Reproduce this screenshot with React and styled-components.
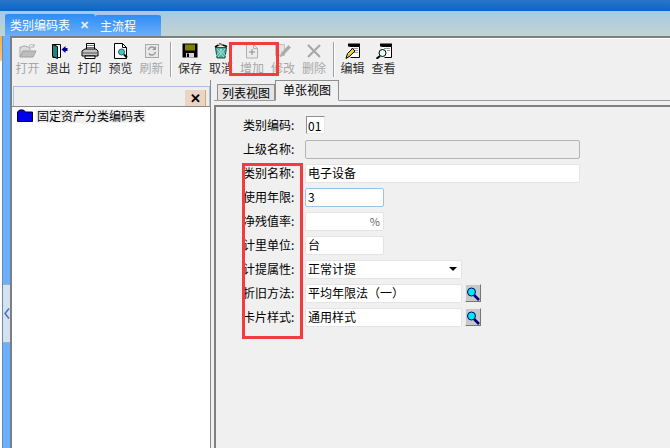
import React from 'react';
import styled, { createGlobalStyle } from 'styled-components';

const GlobalStyle = createGlobalStyle`
  html, body { margin: 0; padding: 0; background: #f0f0f0; }
  body { width: 670px; height: 448px; overflow: hidden; font-family: "Noto Sans CJK SC", "Liberation Sans", sans-serif; font-size: 12px; color: #000; text-spacing-trim: space-all; }
`;

const Page = styled.div`
  position: relative;
  width: 670px;
  height: 448px;
  display: flex;
  flex-direction: column;
  overflow: hidden;
`;

const TitleBar = styled.div`
  height: 11px;
  flex: none;
  background: linear-gradient(#2a76c8, #0a66c8);
`;

const TabBand = styled.div`
  height: 25px;
  flex: none;
  display: flex;
  align-items: flex-end;
  padding-left: 5px;
  background: linear-gradient(#a9c8e2, #c0d4d2);
`;

const TopTab = styled.div`
  height: ${p => p.$h}px;
  display: flex;
  align-items: center;
  box-sizing: border-box;
  color: #fff;
  font-size: 12px;
  border-radius: 3px 3px 0 0;
  border-top: 1px solid #9cc8f4;
  background: linear-gradient(#2f8cf6, #6aaef8);
  width: ${p => p.$w}px;
  padding: 0 0 ${p => p.$lift}px ${p => p.$pad}px;
`;

const TabClose = styled.span`
  margin-left: 10px;
  font-size: 11px;
  font-weight: bold;
  color: #e8f0ff;
`;

const Body = styled.div`
  flex: 1;
  display: flex;
  min-height: 0;
`;

const Gutter = styled.div`
  width: 2px;
  flex: none;
  background: linear-gradient(#f6b04c 0, #f6c47c 24px, #fff 26px);
`;

const SideStrip = styled.div`
  width: 8px;
  flex: none;
  display: flex;
  flex-direction: column;
  box-sizing: border-box;
  border-left: 1px solid #6a8cb0;
  background: #6ab0fc;
`;

const HandleGap = styled.div`
  height: 248px;
  flex: none;
`;

const Handle = styled.div`
  height: 59px;
  flex: none;
  display: flex;
  align-items: center;
  justify-content: center;
  box-sizing: border-box;
  background: #d4e2f0;
  border-top: 1px solid #9ab0c8;
  border-bottom: 1px solid #9ab0c8;
`;

const Main = styled.div`
  flex: 1;
  display: flex;
  flex-direction: column;
  min-width: 0;
  border-left: 2px solid #7e7e7e;
  border-top: 2px solid #7e7e7e;
  box-shadow: inset 0 1px 0 #fff;
`;

const Toolbar = styled.div`
  height: 42px;
  flex: none;
  display: flex;
  align-items: flex-start;
  padding-top: 5px;
  box-sizing: border-box;
`;

const ToolButton = styled.div`
  width: 31px;
  flex: none;
  display: flex;
  flex-direction: column;
  align-items: center;
  gap: 1px;
  white-space: nowrap;
  font-size: 12px;
  line-height: 16px;
  color: ${p => (p.$off ? '#a8a8a8' : '#303030')};
`;

const ToolIcon = styled.svg`
  width: 18px;
  height: 16px;
  display: block;
`;

const ToolSep = styled.div`
  width: 1px;
  height: 35px;
  flex: none;
  margin: -1px 2.5px 0 3px;
  background: #a0a0a0;
  border-right: 1px solid #fff;
`;

const Panes = styled.div`
  flex: 1;
  display: flex;
  min-height: 0;
`;

const LeftPane = styled.div`
  width: 199px;
  flex: none;
  display: flex;
  flex-direction: column;
  box-sizing: border-box;
  padding-top: 6px;
  border-right: 1px solid #8a8a8a;
`;

const PaneHead = styled.div`
  height: 20px;
  flex: none;
  margin-left: 1px;
  padding-right: 3px;
  display: flex;
  justify-content: flex-end;
  box-sizing: border-box;
  border: 1px solid #a8c0e0;
  border-bottom: none;
  background: #eeeeee;
`;

const PaneClose = styled.div`
  width: 21px;
  margin-top: 3px;
  padding-bottom: 1px;
  display: flex;
  align-items: center;
  justify-content: center;
  box-sizing: border-box;
  background: #ecd4c4;
  border-right: 1px solid #d8a868;
  font-size: 13px;
  font-weight: bold;
`;

const Tree = styled.div`
  flex: 1;
  background: #fff;
  border-top: 1px solid #8a8a8a;
  padding: 2px 0 0 5px;
  display: flex;
  align-items: flex-start;
  gap: 3px;
  line-height: 15px;
`;

const FolderIcon = styled.svg`
  width: 16px;
  height: 13px;
  flex: none;
`;

const TreeLabel = styled.span`
  background: #f0f0f0;
  padding: 0 1px;
  font-size: 12px;
  line-height: 14px;
`;

const RightPane = styled.div`
  flex: 1;
  display: flex;
  flex-direction: column;
  margin-left: 3px;
  min-width: 0;
`;

const TabRow = styled.div`
  height: 21px;
  flex: none;
  display: flex;
  align-items: flex-end;
  box-sizing: border-box;
  padding-left: 3px;
  border-bottom: 1px solid #9a9aa4;
`;

const ViewTab = styled.div`
  box-sizing: border-box;
  display: flex;
  align-items: center;
  justify-content: center;
  font-size: 12px;
  width: ${p => (p.$on ? 64 : 58)}px;
  height: ${p => (p.$on ? 21 : 16)}px;
  padding-bottom: ${p => (p.$on ? 2 : 1)}px;
  background: ${p => (p.$on ? '#f0f0f0' : '#e4e4e4')};
  border: 1px solid #8e8e8e;
  border-bottom: ${p => (p.$on ? '1px solid #f0f0f0' : 'none')};
  margin-bottom: ${p => (p.$on ? '-1px' : '0')};
`;

const Sheet = styled.div`
  flex: 1;
  margin-top: 4px;
  border-left: 2px solid #808080;
  border-top: 2px solid #808080;
  padding: 6px 0 0 27px;
  display: flex;
  flex-direction: column;
`;

const Row = styled.div`
  height: 24px;
  display: flex;
  align-items: center;
  flex: none;
`;

const Label = styled.div`
  width: 62px;
  flex: none;
  padding-bottom: 2px;
  box-sizing: border-box;
  font-size: 12px;
  white-space: nowrap;
`;

const Field = styled.div`
  width: ${p => p.$w}px;
  height: 19px;
  box-sizing: border-box;
  display: flex;
  align-items: center;
  justify-content: space-between;
  padding: 0 3px 1px 2px;
  font-size: 12px;
  background: ${p => (p.$off ? '#eeeeee' : '#fff')};
  border: 1px solid ${p => (p.$focus ? '#9cc4e0' : p.$off ? '#b4b4b4' : '#e4e4e4')};
  border-radius: 2px;
`;

const CodeField = styled(Field)`
  height: 18px;
  margin-left: 1px;
  padding: 0 1px;
  border-color: #909090 #e8e8e8 #e8e8e8 #909090;
  border-radius: 0;
`;

const Percent = styled.span`
  color: #666;
  font-size: 11px;
`;

const Arrow = styled.span`
  width: 0;
  height: 0;
  margin-right: 1px;
  border-left: 4px solid transparent;
  border-right: 4px solid transparent;
  border-top: 4px solid #000;
`;

const SearchBtn = styled.div`
  width: 16px;
  height: 18px;
  margin-left: 3px;
  display: flex;
  align-items: center;
  justify-content: center;
  box-sizing: border-box;
  background: #c8c8c8;
  border: 1px solid;
  border-color: #eee #777 #777 #eee;
`;

const Mark = styled.div`
  position: absolute;
  box-sizing: border-box;
  border: 3px solid #f53c3c;
  left: ${p => p.$x}px;
  top: ${p => p.$y}px;
  width: ${p => p.$w}px;
  height: ${p => p.$h}px;
`;

const icons = {
  open: <>
    <path d="M1 14V4h2l1-1h3l1 1h3v3" fill="#dcdcdc" stroke="#a8a8a8" />
    <path d="M1 14l3-6h13l-3 6z" fill="#bdbdbd" stroke="#a0a0a0" />
    <path d="M10 3c1-2 4-2 5 0M15 1v3h-3" fill="none" stroke="#b0b0b0" />
  </>,
  exit: <>
    <path d="M2.500 1.500h8v13h-8" fill="#fff" stroke="#000" />
    <path d="M2.500 1.500l5 2v12l-5-2z" fill="#108a80" stroke="#000" />
    <path d="M11.500 6.500l4-3.500v2h2v3h-2v2z" fill="#00008a" />
  </>,
  print: <>
    <path d="M5.500 .5h8v6h-8z" fill="#fff" stroke="#000" />
    <path d="M6 2.500h7M6 4.500h7" stroke="#777" />
    <path d="M1 8l3-2h11l2 2v5H1z" fill="#c4c4c4" stroke="#000" />
    <path d="M2 10h14" stroke="#555" />
    <path d="M4 13h10v2.500H4z" fill="#fff" stroke="#000" />
  </>,
  preview: <>
    <path d="M2.500 .5h8l4 4v11h-12z" fill="#fff" stroke="#000" />
    <path d="M10.500 .5v4h4" fill="none" stroke="#000" />
    <circle cx="9.500" cy="9" r="3" fill="#40c8c8" stroke="#405858" />
    <path d="M12 11.500l3 3" stroke="#000" strokeWidth="2" />
  </>,
  refresh: <>
    <rect x="2.500" y="1.500" width="13" height="13" fill="#e8e8e8" stroke="#a8a8a8" />
    <path d="M5.500 7a3.600 3.600 0 0 1 6.500-1.500M12.500 9a3.600 3.600 0 0 1-6.500 1.500" fill="none" stroke="#9a9a9a" strokeWidth="1.500" />
    <path d="M13 3v4h-4z" fill="#9a9a9a" />
  </>,
  save: <>
    <path d="M1.500 .5h15v14h-15z" fill="#000" />
    <path d="M4 1.500h10v6H4z" fill="#808000" />
    <path d="M5 10h8v4.500H5z" fill="#d8d8d8" />
    <path d="M6 10.500h2v3.500H6z" fill="#000" />
  </>,
  cancel: <>
    <path d="M3.500 4.500h11l-1.500 10.500H5z" fill="#48b0a0" stroke="#304840" />
    <path d="M5 6l7 8M8 6l6 7M13 6l-7 8M10 6l-6 7" stroke="#c8f0e8" strokeWidth=".8" />
    <path d="M3 4l5-3 7 2.500" fill="none" stroke="#000" strokeWidth="1.500" />
    <path d="M6 1.500l5 .5" stroke="#c8c080" />
  </>,
  add: <>
    <path d="M3.500 1.500h7l4 4v9.500h-11z" fill="#ececec" stroke="#b0b0b0" />
    <path d="M10.500 1.500v4h4" fill="none" stroke="#b0b0b0" />
    <path d="M9 6v6M6 9h6" stroke="#8a8a8a" />
  </>,
  edit: <>
    <path d="M1.500 1.500h9v11h-9z" fill="#e4e4e4" stroke="#c0c0c0" />
    <path d="M6 14l1.500-4 7-7.500 2 2-7 7.500z" fill="#a8a8a8" stroke="#b8b8b8" />
  </>,
  del: <path d="M3 2l12 12M15 2L3 14" stroke="#a8a8a8" strokeWidth="2.200" />,
  modify: <>
    <path d="M4 .5h12v3H4z" fill="#000" />
    <path d="M5.500 3.500h10v11h-9" fill="#fff" stroke="#000" />
    <path d="M7 5.500h7M8 7.500h6M10 9.500h4" stroke="#999" />
    <path d="M2 15.500l1.500-5 5-5 2.500 2.500-5 5z" fill="#f0d020" stroke="#000" />
  </>,
  view: <>
    <path d="M5 .5h12v3H5z" fill="#000" />
    <path d="M6.500 3.500h10v11h-7" fill="#fff" stroke="#000" />
    <path d="M9 5.500h6M12 7.500h3" stroke="#999" />
    <circle cx="7.500" cy="10" r="3.500" fill="#e0ffff" stroke="#000" />
    <path d="M5 13l-3.500 2.800" stroke="#000" strokeWidth="2" />
  </>,
};

const tools = [
  ['open', '打开', true], ['exit', '退出'], ['print', '打印'], ['preview', '预览'], ['refresh', '刷新', true],
  'sep',
  ['save', '保存'], ['cancel', '取消'], ['add', '增加', true], ['edit', '修改', true], ['del', '删除', true],
  'sep',
  ['modify', '编辑'], ['view', '查看'],
];

const Magnifier = () => (
  <svg width="14" height="15" viewBox="0 0 14 15">
    <path d="M8 9l5 5" stroke="#000080" strokeWidth="2.500" />
    <circle cx="5.500" cy="6" r="4" fill="#00e8f0" stroke="#000080" />
  </svg>
);

export default function App() {
  return (
    <Page>
      <GlobalStyle />
      <TitleBar />
      <TabBand>
        <TopTab $w={90} $h={23} $pad={5} $lift={2}>类别编码表<TabClose>✕</TabClose></TopTab>
        <TopTab $w={66} $h={22} $pad={5} $lift={0}>主流程</TopTab>
      </TabBand>
      <Body>
        <Gutter />
        <SideStrip>
          <HandleGap />
          <Handle>
            <svg width="6" height="11" viewBox="0 0 6 11"><path d="M5 .5L1 5.500l4 5" fill="none" stroke="#4a70c0" strokeWidth="1.500" /></svg>
          </Handle>
        </SideStrip>
        <Main>
          <Toolbar>
            {tools.map((t, i) => t === 'sep' ? <ToolSep key={i} /> : (
              <ToolButton key={i} $off={t[2]}>
                <ToolIcon viewBox="0 0 18 16">{icons[t[0]]}</ToolIcon>
                {t[1]}
              </ToolButton>
            ))}
          </Toolbar>
          <Panes>
            <LeftPane>
              <PaneHead><PaneClose>✕</PaneClose></PaneHead>
              <Tree>
                <FolderIcon viewBox="0 0 16 13">
                  <path d="M.5 12.500V3l2-2h4l2 2h7v9.500z" fill="#0000f0" stroke="#000" />
                </FolderIcon>
                <TreeLabel>固定资产分类编码表</TreeLabel>
              </Tree>
            </LeftPane>
            <RightPane>
              <TabRow>
                <ViewTab>列表视图</ViewTab>
                <ViewTab $on>单张视图</ViewTab>
              </TabRow>
              <Sheet>
                <Row><Label>类别编码:</Label><CodeField $w={19}>01</CodeField></Row>
                <Row><Label>上级名称:</Label><Field $w={275} $off /></Row>
                <Row><Label>类别名称:</Label><Field $w={275}>电子设备</Field></Row>
                <Row><Label>使用年限:</Label><Field $w={79} $focus>3</Field></Row>
                <Row><Label>净残值率:</Label><Field $w={79}><span /><Percent>%</Percent></Field></Row>
                <Row><Label>计里单位:</Label><Field $w={79}>台</Field></Row>
                <Row><Label>计提属性:</Label><Field $w={157}>正常计提<Arrow /></Field></Row>
                <Row><Label>折旧方法:</Label><Field $w={157}><span>平均年限法（一）</span></Field><SearchBtn><Magnifier /></SearchBtn></Row>
                <Row><Label>卡片样式:</Label><Field $w={157}>通用样式</Field><SearchBtn><Magnifier /></SearchBtn></Row>
              </Sheet>
            </RightPane>
          </Panes>
        </Main>
      </Body>
      <Mark $x={229} $y={42} $w={50} $h={34} />
      <Mark $x={242} $y={163} $w={61} $h={176} />
    </Page>
  );
}
